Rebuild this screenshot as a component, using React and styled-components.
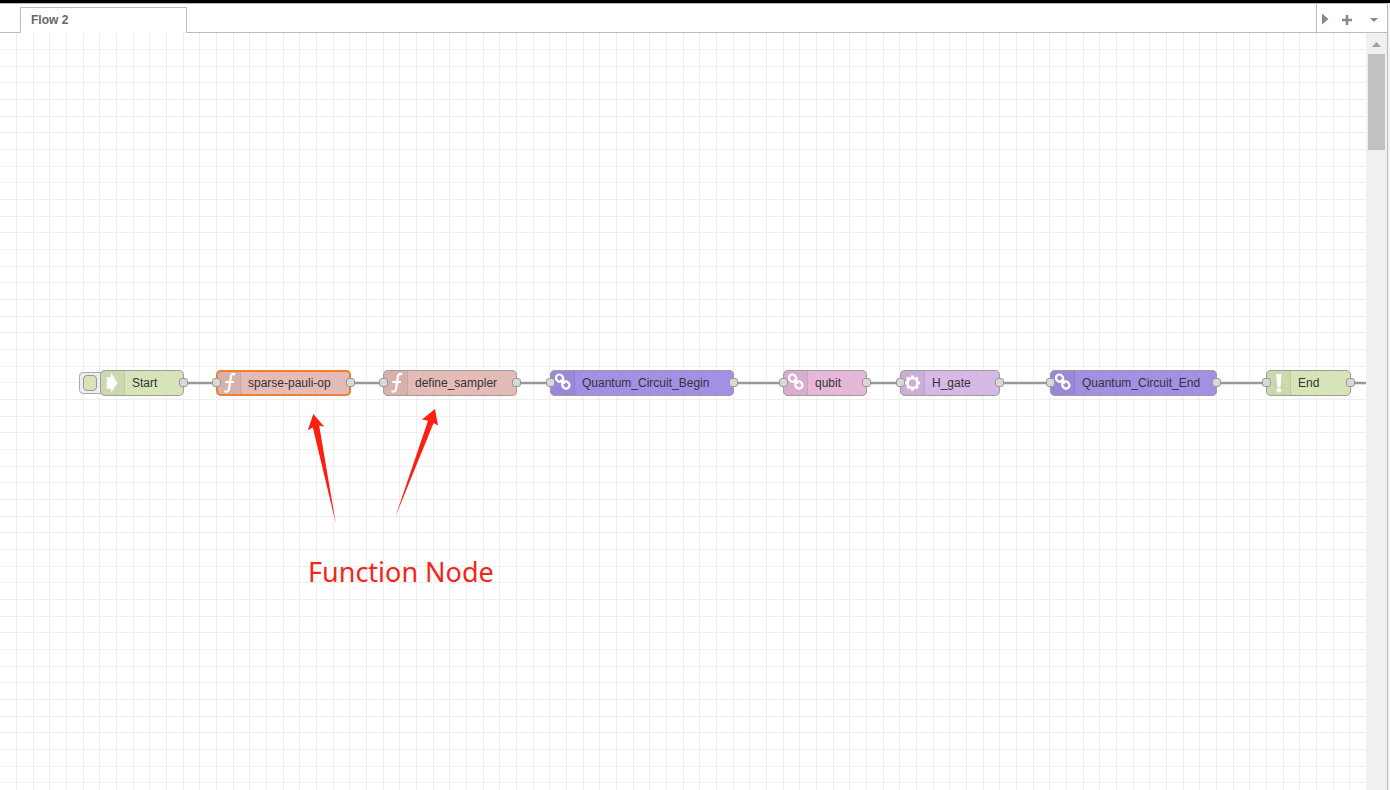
import React from 'react';
import styled, { createGlobalStyle } from 'styled-components';

const GlobalStyle = createGlobalStyle`
  *, *::before, *::after { box-sizing: border-box; }
  body {
    margin: 0;
    background: #f3f3f3;
    font-family: "Liberation Sans", Arial, sans-serif;
  }
`;

const Workspace = styled.div`
  display: flex;
  flex-direction: column;
  min-height: 100vh;
  padding-right: 2px;
  border-top: 3px solid #000;
`;

const TabBar = styled.header`
  display: flex;
  height: 30px;
  background: #fff;
  border-top: 1px solid #bbb;
  border-right: 1px solid #bbb;
`;

const Tabs = styled.nav`
  display: flex;
  flex: 1;
  align-items: flex-end;
  padding-left: 20px;
  box-shadow: inset 0 -1px #bbb;
`;

const Tab = styled.a`
  width: 167px;
  height: 26px;
  padding: 0 10px;
  border: 1px solid #bbb;
  border-bottom: 0;
  background: #fff;
  color: #666;
  font-size: 12px;
  font-weight: 700;
  line-height: 24px;
  text-decoration: none;
`;

const TabActions = styled.div`
  display: flex;
  width: 71px;
  border-left: 1px solid #bbb;
  border-bottom: 1px solid #bbb;
`;

const TabAction = styled.button`
  display: flex;
  align-items: center;
  justify-content: center;
  width: ${(p) => p.$width}px;
  padding: 3px 0 0;
  border: 0;
  background: none;
  color: #888;
`;

const Body = styled.div`
  display: flex;
  flex: 1;
  border-right: 1px solid #bbb;
`;

const gridStops = `transparent 16px, #eee 16px 17px, transparent 17px 33px,
  #eee 33px 34px, transparent 34px 49px, #eee 49px 50px`;

const Canvas = styled.main`
  position: relative;
  flex: 1;
  overflow: hidden;
  background-color: #fff;
  background-image: linear-gradient(to right, ${gridStops}), linear-gradient(to bottom, ${gridStops});
  background-size: 50px 50px;
`;

const Overlay = styled.svg`
  position: absolute;
  top: 0;
  left: 0;
  width: 100%;
  height: 100%;
  pointer-events: none;
`;

const NodeBox = styled.div`
  position: absolute;
  top: 337px;
  left: ${(p) => p.$x}px;
  width: ${(p) => p.$width}px;
  height: 26px;
  display: flex;
  border-radius: 5px;
  background: ${(p) => p.$color};

  &::after {
    content: "";
    position: absolute;
    inset: 0;
    border: ${(p) => (p.$selected ? '2px solid #f08030' : '1px solid #a09c9c')};
    border-radius: 5px;
  }
`;

const NodeIcon = styled.span`
  width: 25px;
  border-right: 1px solid rgba(0, 0, 0, 0.06);
  border-radius: 5px 0 0 5px;
  background: rgba(0, 0, 0, 0.05);

  svg { display: block; }
`;

const NodeLabel = styled.span`
  padding-left: 7px;
  color: #333;
  font-size: 12px;
  line-height: 26px;
  white-space: nowrap;
`;

const Port = styled.span`
  position: absolute;
  z-index: 1;
  top: 8px;
  ${(p) => p.$side}: -4px;
  width: 9px;
  height: 9px;
  border: 1px solid #999;
  border-radius: 3px;
  background: #d9d9d9;
`;

const TriggerButton = styled.button`
  position: absolute;
  top: 339px;
  left: 79px;
  width: 26px;
  height: 22px;
  display: flex;
  align-items: center;
  padding: 0 3px;
  border: 1px solid #aaa;
  border-radius: 4px;
  background: #eee;

  span {
    width: 14px;
    height: 16px;
    border: 1px solid #999;
    border-radius: 4px;
    background: #d7e4b8;
  }
`;

const Annotation = styled.p`
  position: absolute;
  top: 520px;
  left: 308px;
  margin: 0;
  color: #f52518;
  font-family: "Noto Sans", "Open Sans", sans-serif;
  font-size: 27px;
  line-height: 38px;
  white-space: nowrap;
`;

const Scrollbar = styled.div`
  display: flex;
  flex-direction: column;
  align-items: center;
  width: 21px;
  background: #f0f0f0;
`;

const ScrollUp = styled.button`
  display: flex;
  align-items: center;
  justify-content: center;
  width: 17px;
  height: 21px;
  padding: 2px 0 0;
  border: 0;
  background: none;
`;

const ScrollThumb = styled.div`
  width: 17px;
  height: 96px;
  background: #c1c1c1;
`;

const icons = {
  arrow: <path d="M6.7 7.3H11V2.5L17.4 13L11 22.8V18.7H6.7Z" fill="#fff" />,
  func: (
    <path
      d="M19.2 4.4C16.8 3.2 15.2 4.3 14.8 7L13.1 18.6C12.7 21.3 11.2 22.2 8.4 21.2M9.2 12H18"
      fill="none"
      stroke="#fff"
      strokeWidth="2.2"
    />
  ),
  link: (
    <g fill="none" stroke="#fff" strokeWidth="2.3">
      <rect x="5.9" y="4.9" width="7.4" height="6.6" rx="3.2" transform="rotate(45 9.6 8.2)" />
      <rect x="12.1" y="11.6" width="7.4" height="6.6" rx="3.2" transform="rotate(45 15.8 14.9)" />
      <path d="M10.8 9.6L14.8 13.7" />
    </g>
  ),
  gear: (
    <g fill="none" stroke="#fff">
      <circle cx="12.5" cy="13" r="5" strokeWidth="2.4" />
      <circle cx="12.5" cy="13" r="6.6" strokeWidth="2" pathLength="80" strokeDasharray="5.4 4.6" strokeDashoffset="2.7" />
    </g>
  ),
  alert: (
    <g fill="#fff">
      <path d="M10.2 4H15.6L14.4 17.2H11.4Z" />
      <circle cx="12.9" cy="20.2" r="2.3" />
    </g>
  ),
};

const nodes = [
  { label: 'Start', x: 100, width: 84, color: '#d7e4b8', icon: 'arrow', source: true },
  { label: 'sparse-pauli-op', x: 216, width: 135, color: '#e4bbb6', icon: 'func', selected: true },
  { label: 'define_sampler', x: 383, width: 134, color: '#e4bbb6', icon: 'func' },
  { label: 'Quantum_Circuit_Begin', x: 550, width: 184, color: '#a38fe4', icon: 'link' },
  { label: 'qubit', x: 783, width: 84, color: '#e5b8d7', icon: 'link' },
  { label: 'H_gate', x: 900, width: 100, color: '#d6b9e5', icon: 'gear' },
  { label: 'Quantum_Circuit_End', x: 1050, width: 167, color: '#a38fe4', icon: 'link' },
  { label: 'End', x: 1266, width: 85, color: '#d7e4b8', icon: 'alert' },
];

function FlowNode({ label, x, width, color, icon, selected, source }) {
  return (
    <NodeBox $x={x} $width={width} $color={color} $selected={selected}>
      <NodeIcon>
        <svg width="25" height="26" viewBox="0 0 25 26" aria-hidden="true">{icons[icon]}</svg>
      </NodeIcon>
      <NodeLabel>{label}</NodeLabel>
      {!source && <Port $side="left" />}
      <Port $side="right" />
    </NodeBox>
  );
}

export default function App() {
  return (
    <>
      <GlobalStyle />
      <Workspace>
        <TabBar>
          <Tabs>
            <Tab href="#flow-2">Flow 2</Tab>
          </Tabs>
          <TabActions>
            <TabAction $width={17} aria-label="Scroll tabs">
              <svg width="7" height="14" viewBox="0 0 7 14"><path d="M0 0.5L6.5 6L0 11.5Z" fill="currentColor" /></svg>
            </TabAction>
            <TabAction $width={26} aria-label="Add flow">
              <svg width="10" height="10" viewBox="0 0 10 10"><path d="M5 0V10M0 5H10" stroke="currentColor" strokeWidth="2.6" /></svg>
            </TabAction>
            <TabAction $width={27} aria-label="List flows">
              <svg width="8" height="4" viewBox="0 0 8 4"><path d="M0 0H8L4 4Z" fill="currentColor" /></svg>
            </TabAction>
          </TabActions>
        </TabBar>
        <Body>
          <Canvas>
            <Overlay aria-hidden="true">
              {nodes.map((node, i) => (
                <line
                  key={node.label}
                  x1={node.x + node.width}
                  x2={nodes[i + 1] ? nodes[i + 1].x : node.x + node.width + 400}
                  y1="350"
                  y2="350"
                  stroke="#999"
                  strokeWidth="2.5"
                />
              ))}
            </Overlay>
            <TriggerButton aria-label="Trigger Start"><span /></TriggerButton>
            {nodes.map((node) => <FlowNode key={node.label} {...node} />)}
            <Overlay aria-hidden="true">
              <g fill="#fb2012">
                <path d="M313.3 381L324.3 393.7L319.2 392.5L335.8 490.5L312.8 394.5L307.8 397.2Z" />
                <path d="M435 376L438 392.5L433.6 390L395.3 484L428 387.8L422 386.6Z" />
              </g>
            </Overlay>
            <Annotation>Function Node</Annotation>
          </Canvas>
          <Scrollbar>
            <ScrollUp aria-label="Scroll up">
              <svg width="9" height="5" viewBox="0 0 9 5"><path d="M0 5H9L4.5 0Z" fill="#a0a0a0" /></svg>
            </ScrollUp>
            <ScrollThumb />
          </Scrollbar>
        </Body>
      </Workspace>
    </>
  );
}
